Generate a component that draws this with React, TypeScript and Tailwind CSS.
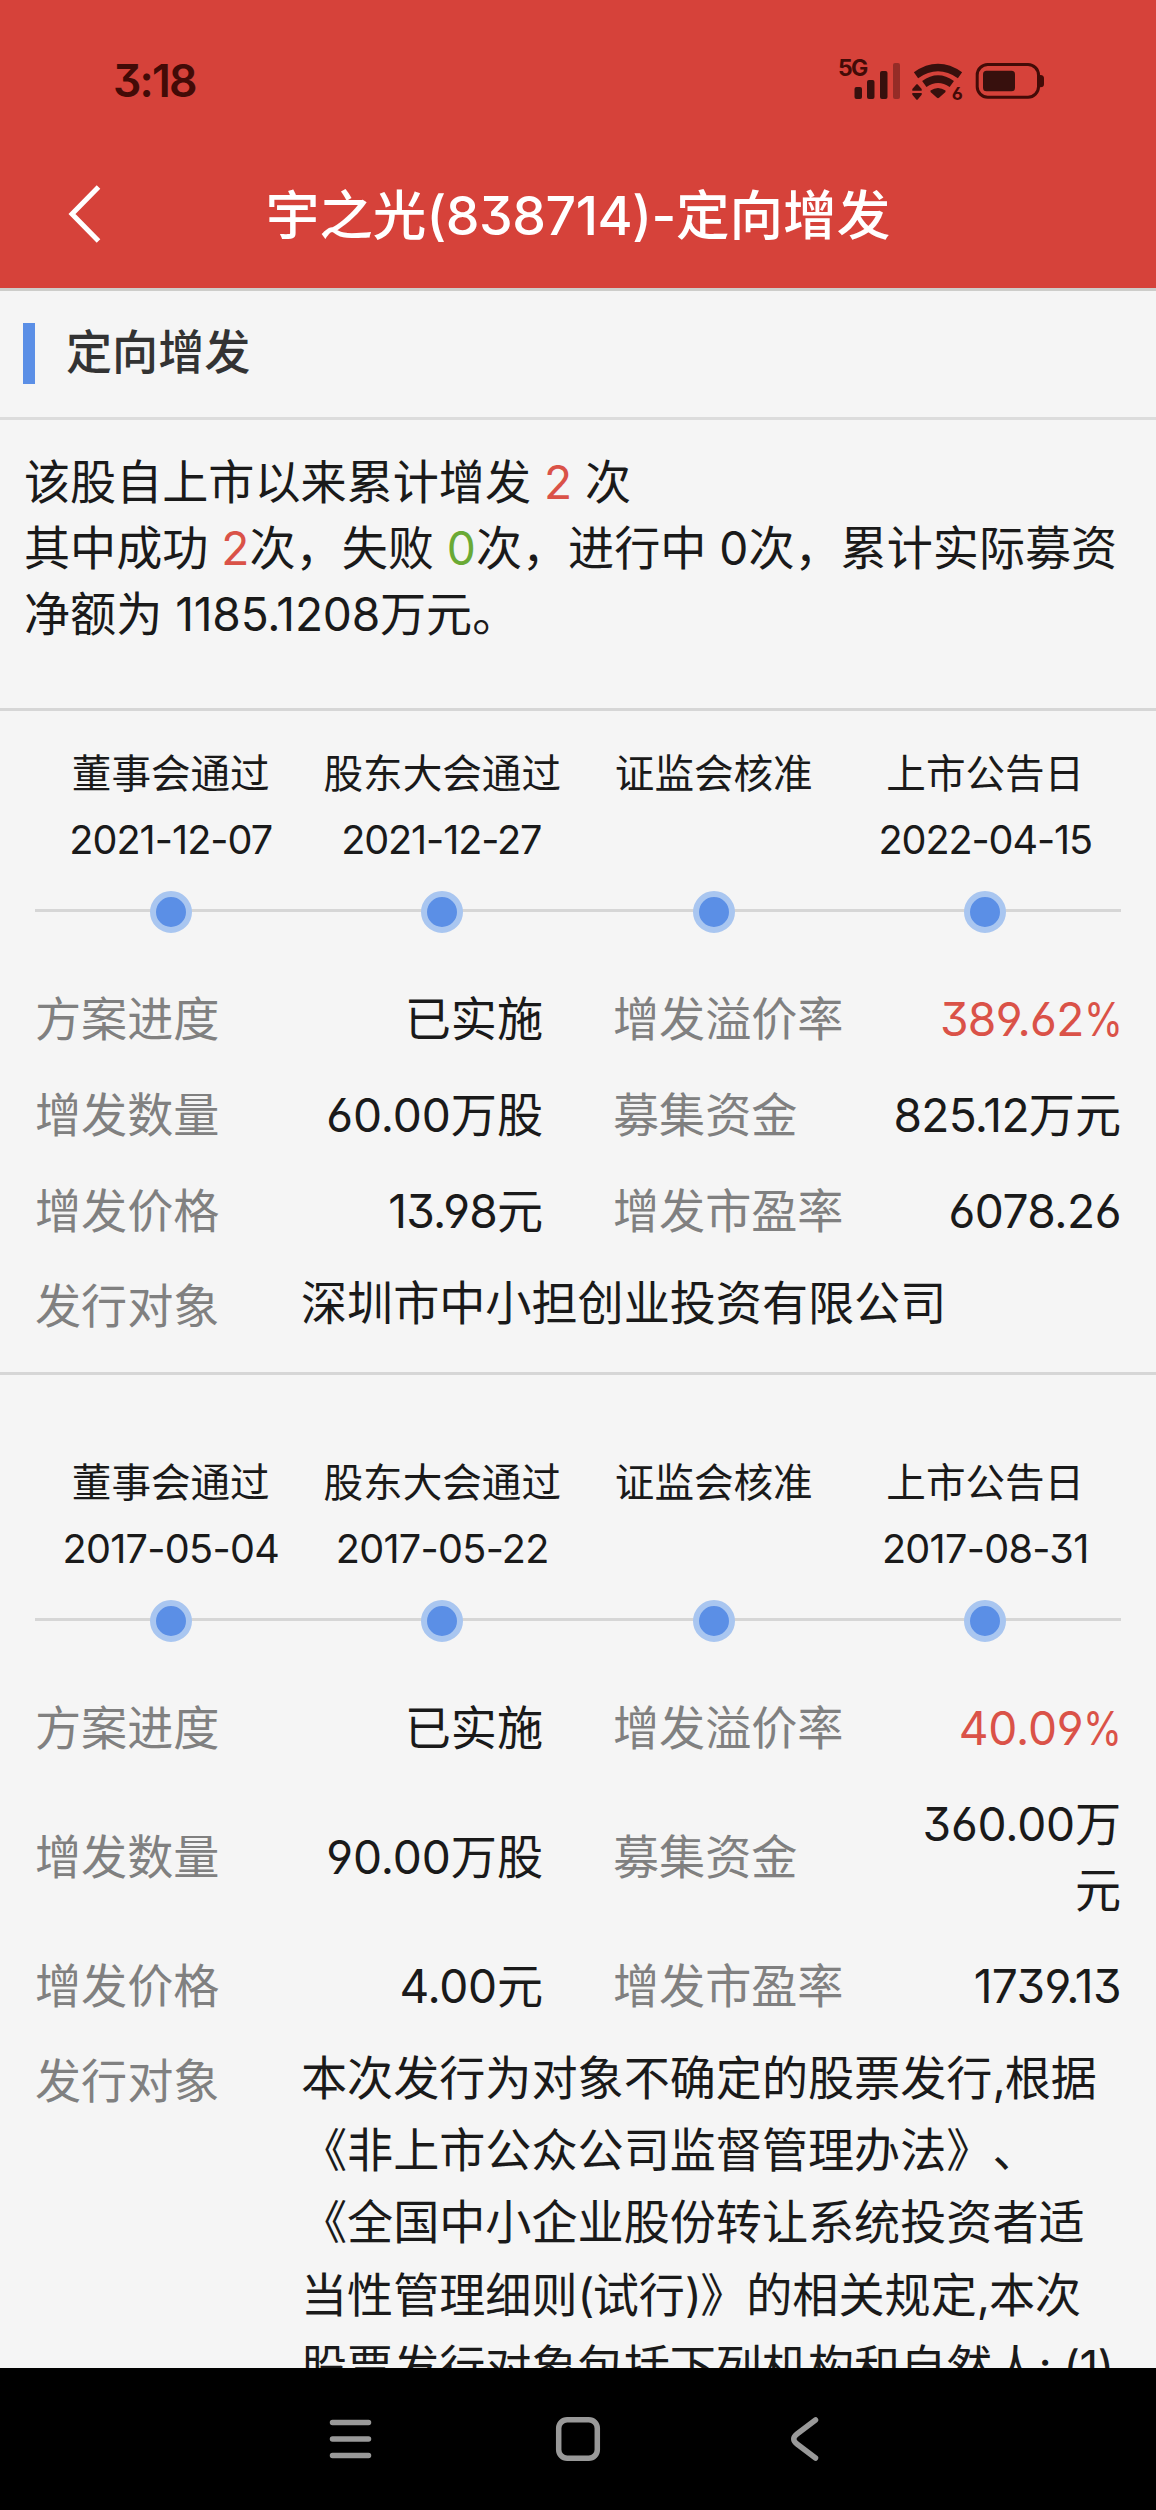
import type { ReactNode } from "react";

type Cell = { text: ReactNode; className?: string };
type Placement = {
  steps: { label: string; date?: string; className?: string }[];
  rows: { left: string; leftValue: Cell; right: string; rightValue: Cell }[];
  target: ReactNode[];
};

const pct = (
  <span className="-mr-[7.5px] inline-block origin-left scale-x-[.86]">%</span>
);
const comma = <span className="tracking-[-1px]">,</span>;

const placements: Placement[] = [
  {
    steps: [
      { label: "董事会通过", date: "2021-12-07", className: "tracking-[-.95px]" },
      { label: "股东大会通过", date: "2021-12-27", className: "tracking-[-1.1px] pr-[2px]" },
      { label: "证监会核准" },
      { label: "上市公告日", date: "2022-04-15", className: "tracking-[-1.1px]" },
    ],
    rows: [
      {
        left: "方案进度",
        leftValue: { text: "已实施" },
        right: "增发溢价率",
        rightValue: { text: <>389.62{pct}</>, className: "tracking-[-.6px] text-[#da5248]" },
      },
      {
        left: "增发数量",
        leftValue: { text: <><span className="tracking-[-.1px]">60.00</span>万股</> },
        right: "募集资金",
        rightValue: { text: <><span className="tracking-[-.7px]">825.12</span>万元</> },
      },
      {
        left: "增发价格",
        leftValue: { text: <><span className="tracking-[-.8px]">13.98</span>元</> },
        right: "增发市盈率",
        rightValue: { text: "6078.26", className: "tracking-[-.5px]" },
      },
    ],
    target: ["深圳市中小担创业投资有限公司"],
  },
  {
    steps: [
      { label: "董事会通过", date: "2017-05-04", className: "tracking-[-.7px]" },
      { label: "股东大会通过", date: "2017-05-22", className: "tracking-[-.7px]" },
      { label: "证监会核准" },
      { label: "上市公告日", date: "2017-08-31", className: "tracking-[-.7px]" },
    ],
    rows: [
      {
        left: "方案进度",
        leftValue: { text: "已实施" },
        right: "增发溢价率",
        rightValue: { text: <>40.09{pct}</>, className: "tracking-[-.2px] text-[#da5248]" },
      },
      {
        left: "增发数量",
        leftValue: { text: <><span className="tracking-[-.1px]">90.00</span>万股</> },
        right: "募集资金",
        rightValue: { text: <><span className="tracking-[-.2px]">360.00</span>万<br />元</> },
      },
      {
        left: "增发价格",
        leftValue: { text: <><span className="tracking-[-.3px]">4.00</span>元</> },
        right: "增发市盈率",
        rightValue: { text: "1739.13", className: "tracking-[-.6px]" },
      },
    ],
    target: [
      <>本次发行为对象不确定的股票发行{comma}根据</>,
      "《非上市公众公司监督管理办法》、",
      "《全国中小企业股份转让系统投资者适",
      <>
        当性管理细则<span className="tracking-[-1.6px]">(</span>试行<span className="tracking-[-1.6px]">)</span>》的相关规定{comma}本次
      </>,
      <>
        股票发行对象包括下列机构和自然人<span className="tracking-[-.7px]">: (1)</span>
      </>,
    ],
  },
];

function StatusIcons() {
  return (
    <svg width="208" height="50" viewBox="838 55 208 50" fill="#37100d" className="shrink-0">
      <text x="838" y="75.5" fontSize="23" fontWeight="700" letterSpacing="-1.6" fill="#430b07">5G</text>
      <rect x="854.5" y="87" width="7.5" height="12" rx="2" />
      <rect x="867" y="80" width="7.5" height="19" rx="2" />
      <rect x="880" y="71" width="7.5" height="28" rx="2" />
      <rect x="893" y="63" width="7" height="36" rx="2" fill="#952c27" />
      <g fill="none" stroke="#37100d" strokeWidth="7.4">
        <path d="M916 75.2Q938 59.8 960 75.2" />
        <path d="M924.3 84Q938 74.2 951.8 84" />
      </g>
      <path d="M930.5 90.5Q938 85.5 945.5 90.5V92L939 97.8Q938 98.6 937 97.8L930.5 92Z" />
      <path d="M912.3 90.7V89L916.5 84.2H917.5L921.7 89V90.7ZM912.3 93V94.7L916.5 99.8H917.5L921.7 94.7V93Z" />
      <text x="951.8" y="99.6" fontSize="18" fontWeight="700" fill="#430b07">6</text>
      <rect x="977.2" y="64.5" width="61.3" height="32.7" rx="10.5" fill="none" stroke="#430b07" strokeWidth="3" />
      <rect x="983" y="70.7" width="32" height="20.6" rx="3.5" />
      <path d="M1039 75H1040.5Q1044 75 1044 78.5V84Q1044 87.3 1040.5 87.3H1039Z" fill="#430b07" />
    </svg>
  );
}

function Timeline({ steps }: { steps: Placement["steps"] }) {
  return (
    <div className="relative mx-[35px] grid grid-cols-4">
      <div className="absolute inset-x-0 bottom-[21px] h-[3px] bg-[#d6d6d6]" />
      {steps.map((s) => (
        <div key={s.label} className="flex flex-col items-center text-[39.6px] leading-[66px] whitespace-nowrap">
          <div>{s.label}</div>
          <div className={`h-[66px] ${s.className ?? ""}`}>{s.date}</div>
          <div className="relative mt-[18px] size-[42px] rounded-full border-[6px] border-[#a9c6f0] bg-[#5b8fe6]" />
        </div>
      ))}
    </div>
  );
}

function PlacementBlock({ p }: { p: Placement }) {
  return (
    <section>
      <Timeline steps={p.steps} />
      <div className="mt-[38px] px-[35px]">
        {p.rows.map((r) => (
          <div key={r.left} className="flex items-center py-[15px] leading-[66px] whitespace-nowrap">
            <div className="w-[230px] text-[#808080]">{r.left}</div>
            <div className={`w-[278px] text-right ${r.leftValue.className ?? ""}`}>{r.leftValue.text}</div>
            <div className="ml-[70px] text-[#808080]">{r.right}</div>
            <div className={`flex-1 text-right ${r.rightValue.className ?? ""}`}>{r.rightValue.text}</div>
          </div>
        ))}
        <div className="flex items-start pt-[8px] whitespace-nowrap">
          <div className="w-[266px] pt-[3px] leading-[72.2px] text-[#808080]">发行对象</div>
          <div className="leading-[72.2px]">
            {p.target.map((line, i) => (
              <div key={i}>{line}</div>
            ))}
          </div>
        </div>
      </div>
    </section>
  );
}

export default function App() {
  return (
    <div
      className="flex h-[2510px] w-[1156px] flex-col overflow-hidden bg-[#f5f5f5] font-[Inter,'Noto_Sans_CJK_SC',sans-serif] text-[46.1px] text-[#1a1a1a] [font-feature-settings:'cv03','cv04','cv09'] [text-spacing-trim:space-all]"
    >
      <header className="h-[291px] shrink-0 border-b-[3px] border-[#cdcdca] bg-[#d6423a]">
        <div className="flex h-[144px] items-start justify-between pr-[110px] pl-[113px]">
          <div className="mt-[51px] text-[44.5px] leading-[60px] font-semibold tracking-[-1.8px] text-[#430b07]">3:18</div>
          <div className="mt-[55px]">
            <StatusIcons />
          </div>
        </div>
        <div className="relative flex h-[144px] items-center justify-center">
          <svg width="40" height="64" viewBox="0 0 40 64" className="absolute top-[38px] left-[66px]" fill="none" stroke="#fff" strokeWidth="5">
            <path d="M32.5 5L6 32L32.5 59" />
          </svg>
          <h1 className="text-[53.6px] leading-[80px] font-medium whitespace-nowrap text-white">
            宇之光<span className="tracking-[-.45px]">(838714)-</span>定向增发
          </h1>
        </div>
      </header>

      <main className="min-h-0 flex-1 overflow-hidden">
        <div className="flex h-[129px] items-center border-b-[3px] border-[#dcdcdc] pl-[23px]">
          <div className="-mt-[1px] h-[61px] w-[12px] bg-[#5b8fe6]" />
          <h2 className="mb-[3px] ml-[31px] font-medium text-[#333]">定向增发</h2>
        </div>

        <div className="h-[291px] border-b-[3px] border-[#d6d6d6] pt-[29px] pl-[24px] leading-[66px] whitespace-nowrap">
          <div>
            该股自上市以来累计增发 <span className="text-[#da5248]">2</span> 次
          </div>
          <div>
            其中成功 <span className="text-[#da5248]">2</span>次，失败 <span className="text-[#6aaa35]">0</span>次，进行中 0次，累计实际募资
          </div>
          <div>
            净额为 <span className="tracking-[-.2px]">1185.1208</span>万元。
          </div>
        </div>

        <div className="h-[664px] border-b-[3px] border-[#d6d6d6] pt-[30px]">
          <PlacementBlock p={placements[0]} />
        </div>
        <div className="pt-[75px]">
          <PlacementBlock p={placements[1]} />
        </div>
      </main>

      <nav className="flex h-[142px] shrink-0 items-center justify-center bg-black">
        <svg width="500" height="60" viewBox="328 2409 500 60" fill="none" stroke="#999" strokeWidth="5.5" strokeLinecap="round" strokeLinejoin="round">
          <path d="M332.5 2422.5H368.5M332.5 2439H368.5M332.5 2455.500H368.5" />
          <rect x="558.7" y="2419.7" width="38.6" height="38.6" rx="8.5" />
          <path d="M815.5 2420L797 2434Q790.5 2439 797 2444L815.5 2458" />
        </svg>
      </nav>
    </div>
  );
}
